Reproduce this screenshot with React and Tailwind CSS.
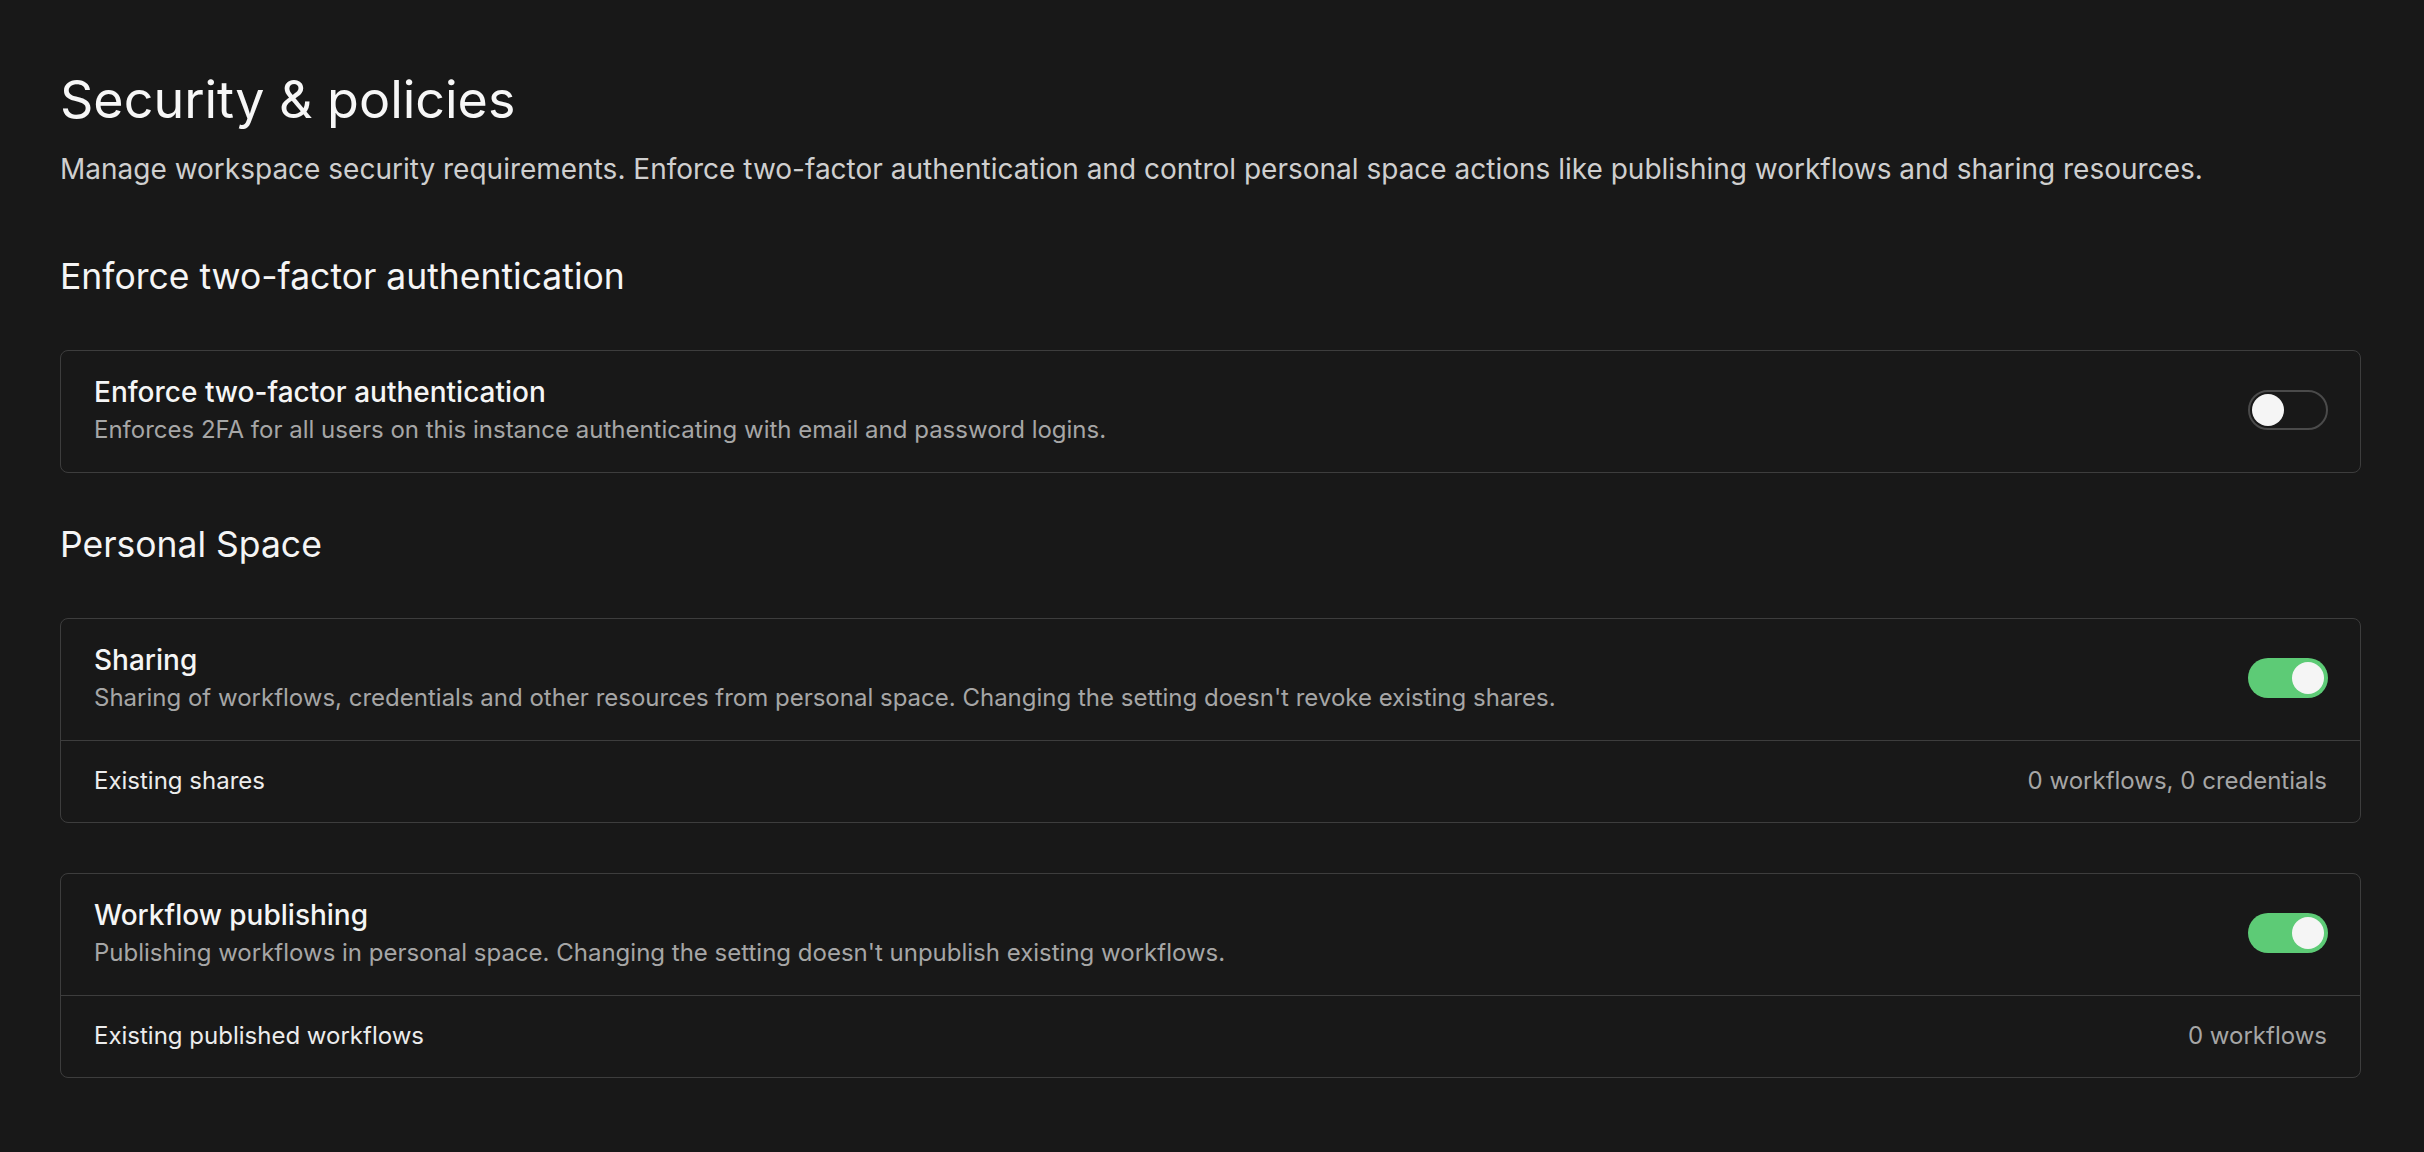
import { useState } from 'react';

function Toggle({ on, onChange }) {
  return (
    <button
      onClick={() => onChange(!on)}
      className={`relative w-[80px] h-[40px] rounded-full shrink-0 flex items-center transition-colors ${
        on ? 'bg-[#5dcb76] justify-end pr-[4px]' : 'bg-transparent border-2 border-[#4a4a4a] justify-start pl-[2px]'
      }`}
    >
      <span className="block w-[32px] h-[32px] rounded-full bg-[#f5f5f5]" />
    </button>
  );
}

function SettingRow({ title, description, on, onChange }) {
  return (
    <div className="flex items-center justify-between pl-[33px] pr-[32px] pt-[24px] pb-[27px]">
      <div className="flex flex-col gap-[6px]">
        <div className="text-[28px] leading-[34px] font-medium text-[#f5f5f5]">{title}</div>
        <div className="text-[24px] leading-[30px] text-[#a6a6a6]">{description}</div>
      </div>
      <Toggle on={on} onChange={onChange} />
    </div>
  );
}

function InfoRow({ label, value }) {
  return (
    <div className="flex items-center justify-between pl-[33px] pr-[33px] pt-[24px] pb-[25px] border-t border-[#3d3d3d]">
      <span className="text-[24px] leading-[32px] text-[#ececec]">{label}</span>
      <span className="text-[24px] leading-[32px] text-[#a6a6a6]">{value}</span>
    </div>
  );
}

export default function App() {
  const [twoFactor, setTwoFactor] = useState(false);
  const [sharing, setSharing] = useState(true);
  const [publishing, setPublishing] = useState(true);

  return (
    <div
      className="min-h-screen bg-[#181818] pl-[60px] pr-[63px] pt-[69px] pb-[60px]"
      style={{ fontFamily: 'Inter, "Noto Sans", sans-serif' }}
    >
      <h1 className="text-[52px] leading-[62px] font-normal text-[#f7f7f7]">Security &amp; policies</h1>
      <p className="mt-[18px] text-[28px] leading-[40px] text-[#cfcfcf]">
        Manage workspace security requirements. Enforce two-factor authentication and control personal space actions like publishing workflows and sharing resources.
      </p>

      <h2 className="mt-[66px] text-[35.5px] leading-[44px] font-normal text-[#f5f5f5]">Enforce two-factor authentication</h2>
      <div className="mt-[51px] rounded-[8px] border border-[#3d3d3d]">
        <SettingRow
          title="Enforce two-factor authentication"
          description="Enforces 2FA for all users on this instance authenticating with email and password logins."
          on={twoFactor}
          onChange={setTwoFactor}
        />
      </div>

      <h2 className="mt-[50px] text-[35.5px] leading-[44px] font-normal text-[#f5f5f5]">Personal Space</h2>
      <div className="mt-[51px] rounded-[8px] border border-[#3d3d3d]">
        <SettingRow
          title="Sharing"
          description="Sharing of workflows, credentials and other resources from personal space. Changing the setting doesn't revoke existing shares."
          on={sharing}
          onChange={setSharing}
        />
        <InfoRow label="Existing shares" value="0 workflows, 0 credentials" />
      </div>

      <div className="mt-[50px] rounded-[8px] border border-[#3d3d3d]">
        <SettingRow
          title="Workflow publishing"
          description="Publishing workflows in personal space. Changing the setting doesn't unpublish existing workflows."
          on={publishing}
          onChange={setPublishing}
        />
        <InfoRow label="Existing published workflows" value="0 workflows" />
      </div>
    </div>
  );
}
